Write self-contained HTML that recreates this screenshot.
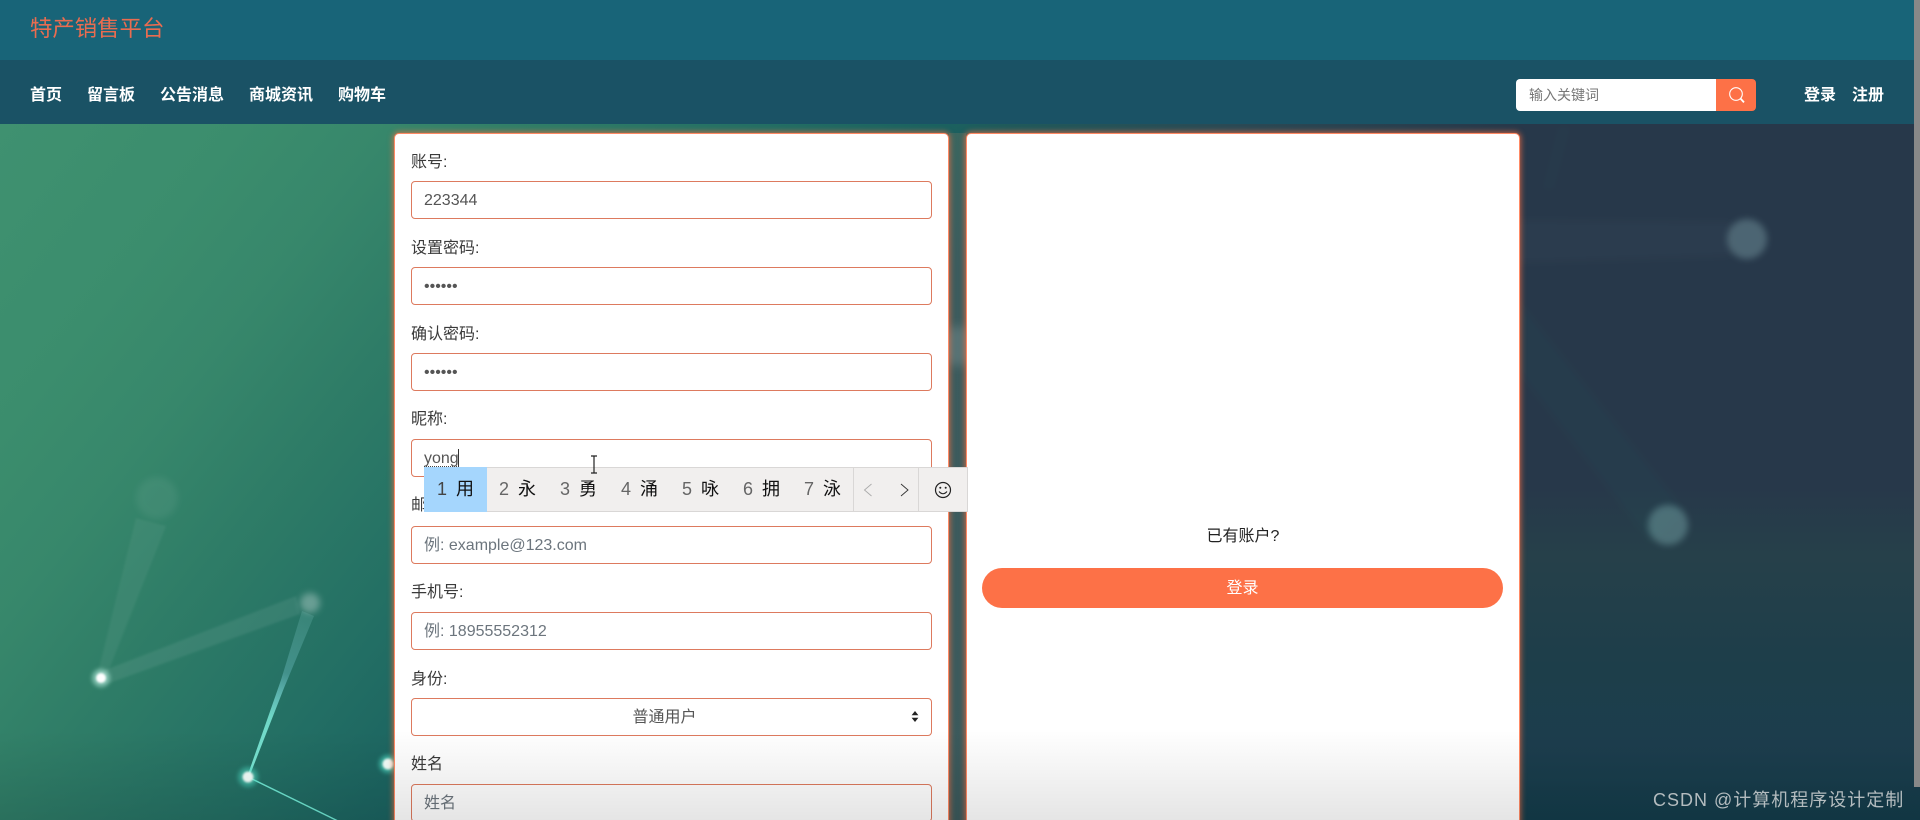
<!DOCTYPE html>
<html lang="zh-CN">
<head>
<meta charset="utf-8">
<title>特产销售平台</title>
<style>
html,body{margin:0;padding:0;width:1920px;height:820px;overflow:hidden;background:#27384a}
*{box-sizing:border-box}
body{position:relative;font-family:"Liberation Sans","Noto Sans CJK SC",sans-serif;font-size:16px;color:#333}
.a{position:absolute;white-space:nowrap}
#bg{left:0;top:124px;width:1920px;height:696px;background:
 linear-gradient(128deg,#3f9170 0%,#3b8d6d 10%,#37876b 16%,#2f7d67 22%,#236f64 31%,#1a6260 38%,#1f5a5b 41%,#2a4a55 50%,#27384a 62%,#27384a 100%)}
#bgr{left:950px;top:124px;width:970px;height:696px;background:linear-gradient(180deg,rgba(38,64,74,0) 0%,rgba(38,64,74,0) 52%,rgba(38,64,74,1) 62%,#1d3e4a 78%,#1c3d4d 90%,#133c4a 100%)}
#gap{left:949px;top:133px;width:17px;height:687px;background:linear-gradient(180deg,#3a665f 0%,#3c5c5e 20%,#3b5a5c 100%)}
#top{left:0;top:0;width:1920px;height:60px;background:#186478}
#nav{left:0;top:60px;width:1920px;height:64px;background:#1a5265}
.brand{left:30px;top:13px;font-size:22.4px;line-height:32px;color:#e96c50}
.n{top:80px;font-size:16px;line-height:32px;font-weight:700;color:#fff}
.s{left:1516px;top:79px;width:200px;height:32px;background:#fff;border-radius:4px 0 0 4px;font-size:14px;line-height:32px;padding-left:13px;color:#777}
.sb{left:1716px;top:79px;width:40px;height:32px;background:#fd7147;border-radius:0 4px 4px 0}
.card{background:#fff;border:1px solid #ff8a65;border-radius:5px;box-shadow:0 0 6px 1px rgba(255,112,67,.7);top:133px;height:720px}
.l{left:411px;font-size:16px;line-height:24px;color:#3a3a3a}
.i{left:411px;width:521px;height:38px;border:1px solid #dd7a5e;border-radius:4px;background:#fff;line-height:37px;padding-left:12px;color:#555;font-size:16px}
.ph{color:#6c757d}
.ime{left:424px;top:467px;width:544px;height:45px;background:#f1efee;border:1px solid #d9d7d6}
.h{left:424px;top:467px;width:63px;height:45px;background:#a5d6fd}
.d{top:467px;font-size:18px;line-height:44px;color:#666;transform:translateX(-50%)}
.c{top:467px;font-size:18px;line-height:44px;color:#111;transform:translateX(-50%)}
.btn{left:982px;top:568px;width:521px;height:40px;border-radius:20px;background:#fd7147;color:#fff;text-align:center;line-height:41px;font-size:16px}
#fade{left:0;top:730px;width:1920px;height:90px;background:linear-gradient(180deg,rgba(0,0,0,0),rgba(0,0,0,.1))}
#sc{left:1914px;top:0;width:6px;height:787px;background:#888}
#wm{left:1653px;top:786px;font-size:18px;line-height:28px;color:#b4bcbf;letter-spacing:1px}
</style>
</head>
<body>
<div class="a" id="bg"></div>
<div class="a" id="bgr"></div>
<div class="a" id="gap"></div>
<svg class="a" style="left:0;top:0" width="1920" height="820" viewBox="0 0 1920 820">
<defs>
<filter id="b1" x="-50%" y="-50%" width="200%" height="200%"><feGaussianBlur stdDeviation="2"/></filter>
<filter id="b2" x="-50%" y="-50%" width="200%" height="200%"><feGaussianBlur stdDeviation="1"/></filter>
<filter id="b4" x="-50%" y="-50%" width="200%" height="200%"><feGaussianBlur stdDeviation="3.5"/></filter>
<filter id="b3" x="-100%" y="-100%" width="300%" height="300%"><feGaussianBlur stdDeviation="5"/></filter>
<linearGradient id="g1" gradientUnits="userSpaceOnUse" x1="248" y1="777" x2="310" y2="603"><stop offset="0" stop-color="#7be8d6"/><stop offset=".35" stop-color="#7be8d6" stop-opacity=".85"/><stop offset=".6" stop-color="#9ef" stop-opacity=".25"/><stop offset="1" stop-color="#bff" stop-opacity=".1"/></linearGradient>
</defs>
<g filter="url(#b2)">
<polygon points="97,676 105,680 166,526 136,518" fill="#fff" opacity=".05"/>
<polygon points="100,672 104,685 300,614 296,596" fill="#fff" opacity=".07"/>
</g>
<polygon points="247.2,776.5 249,777.5 284,688 314,616 302,611 281,680" fill="url(#g1)"/>
<line x1="248" y1="777" x2="340" y2="822" stroke="#6fe6d2" stroke-width="1.4"/>
<circle cx="157" cy="498" r="21" fill="#fff" opacity=".06" filter="url(#b4)"/>
<circle cx="310" cy="603" r="10" fill="#fff" opacity=".3" filter="url(#b4)"/>
<circle cx="101" cy="678" r="9" fill="#bff5e6" opacity=".55" filter="url(#b1)"/>
<circle cx="101" cy="678" r="5" fill="#fff" filter="url(#b2)"/>
<circle cx="248" cy="777" r="10" fill="#4fe0c8" opacity=".5" filter="url(#b1)"/>
<circle cx="248" cy="777" r="5.5" fill="#f4fffb" filter="url(#b2)"/>
<circle cx="388" cy="764" r="9" fill="#4fe0c8" opacity=".6" filter="url(#b1)"/>
<circle cx="388" cy="764" r="5.5" fill="#f4fffb" filter="url(#b2)"/>
<circle cx="958" cy="346" r="20" fill="#fff" opacity=".14" filter="url(#b3)"/>
<g filter="url(#b4)">
<polygon points="1510,220 1510,263 1730,256 1730,222" fill="#fff" opacity=".018"/>
<polygon points="1510,290 1510,360 1650,542 1685,512" fill="#4fa" opacity=".018"/>
<polygon points="1545,188 1552,188 1568,128 1560,128" fill="#4fa" opacity=".015"/>
</g>
<circle cx="1747" cy="239" r="20" fill="#8fb5bb" opacity=".36" filter="url(#b4)"/>
<circle cx="1668" cy="525" r="20" fill="#8fc5c5" opacity=".36" filter="url(#b4)"/>
</svg>

<div class="a" id="top"></div>
<div class="a" id="nav"></div>
<div class="a brand">特产销售平台</div>
<div class="a n" style="left:30px">首页</div>
<div class="a n" style="left:87px">留言板</div>
<div class="a n" style="left:160px">公告消息</div>
<div class="a n" style="left:249px">商城资讯</div>
<div class="a n" style="left:338px">购物车</div>
<div class="a s">输入关键词</div>
<div class="a sb"><svg width="40" height="32" viewBox="0 0 40 32" style="display:block"><circle cx="20" cy="15" r="6.3" fill="none" stroke="#fff" stroke-width="1.1"/><path d="M24.6 19.6L28 23.4" stroke="#fff" stroke-width="1.8" fill="none"/></svg></div>
<div class="a n" style="left:1804px">登录</div>
<div class="a n" style="left:1852px">注册</div>

<div class="a card" style="left:394px;width:555px"></div>
<div class="a card" style="left:966px;width:554px"></div>

<div class="a l" style="top:151px">账号:</div>
<div class="a i" style="top:181px">223344</div>
<div class="a l" style="top:237px">设置密码:</div>
<div class="a i" style="top:267px">••••••</div>
<div class="a l" style="top:323px">确认密码:</div>
<div class="a i" style="top:353px">••••••</div>
<div class="a l" style="top:408px">昵称:</div>
<div class="a i" style="top:439px">yong</div>
<div class="a" style="left:424px;top:466px;width:33px;border-top:1px dotted #444"></div>
<div class="a" style="left:458px;top:449px;width:1px;height:18px;background:#333"></div>
<div class="a l" style="top:494px">邮箱:</div>
<div class="a i ph" style="top:526px">例: example@123.com</div>
<div class="a l" style="top:581px">手机号:</div>
<div class="a i ph" style="top:612px">例: 18955552312</div>
<div class="a l" style="top:668px">身份:</div>
<div class="a i" style="top:698px;text-align:center;padding-left:0;padding-right:14px">普通用户</div>
<svg class="a" style="left:910px;top:710px" width="10" height="13" viewBox="0 0 10 13"><path d="M5 1L8.4 5.2H1.6ZM5 12L1.6 7.8H8.4Z" fill="#222"/></svg>
<div class="a l" style="top:753px">姓名</div>
<div class="a i ph" style="top:784px">姓名</div>

<div class="a" style="left:966px;top:525px;width:554px;text-align:center;font-size:16px;line-height:24px;color:#222">已有账户?</div>
<div class="a btn">登录</div>

<div class="a ime"></div>
<div class="a h"></div>
<div class="a d" style="left:442px;color:#444">1</div><div class="a c" style="left:465px">用</div>
<div class="a d" style="left:504px">2</div><div class="a c" style="left:527px">永</div>
<div class="a d" style="left:565px">3</div><div class="a c" style="left:588px">勇</div>
<div class="a d" style="left:626px">4</div><div class="a c" style="left:649px">涌</div>
<div class="a d" style="left:687px">5</div><div class="a c" style="left:710px">咏</div>
<div class="a d" style="left:748px">6</div><div class="a c" style="left:771px">拥</div>
<div class="a d" style="left:809px">7</div><div class="a c" style="left:832px">泳</div>
<div class="a" style="left:853px;top:468px;width:1px;height:43px;background:#d9d7d6"></div>
<div class="a" style="left:918px;top:468px;width:1px;height:43px;background:#d9d7d6"></div>
<svg class="a" style="left:860px;top:480px" width="100" height="20" viewBox="0 0 100 20">
<path d="M11.5 4L4.5 10L11.5 16" fill="none" stroke="#aaa" stroke-width=".9"/>
<path d="M41 4L48 10L41 16" fill="none" stroke="#333" stroke-width=".9"/>
<circle cx="83" cy="10" r="7.5" fill="none" stroke="#222" stroke-width="1.2"/>
<circle cx="80.3" cy="7.8" r="1" fill="#222"/><circle cx="85.7" cy="7.8" r="1" fill="#222"/>
<path d="M79 11.5Q83 16 87 11.5" fill="none" stroke="#222" stroke-width="1.1"/>
</svg>
<svg class="a" style="left:589px;top:455px" width="10" height="19" viewBox="0 0 10 19"><path d="M2 1H8M5 1V18M2 18H8" fill="none" stroke="#222" stroke-width="1.2"/></svg>

<div class="a" id="fade"></div>
<div class="a" id="sc"></div>
<div class="a" id="wm">CSDN @计算机程序设计定制</div>
</body>
</html>
